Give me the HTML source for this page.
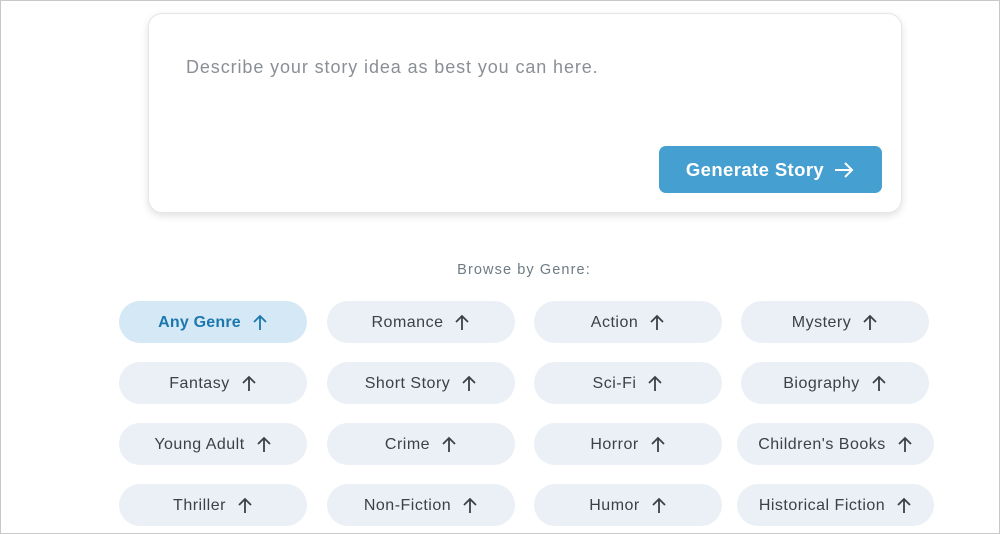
<!DOCTYPE html><html><head><style>
body{margin:0;width:1000px;height:534px;background:#fff;font-family:"Liberation Sans",sans-serif;position:relative;overflow:hidden}
.frame{position:absolute;left:0;top:0;width:998px;height:532px;border:1px solid #c8c8c8}
.card{position:absolute;left:148px;top:13px;width:752px;height:198px;border:1px solid #e4e6ea;border-radius:14px;box-shadow:0 3px 8px rgba(0,0,0,.12);background:#fff}
.ph{position:absolute;left:37px;top:43px;font-size:18px;color:#8a8f96;letter-spacing:0.9px}
.btn{position:absolute;left:510px;top:132px;width:223px;height:47px;background:#459fd0;border-radius:7px;color:#fff;font-weight:bold;font-size:18.5px;letter-spacing:0.4px;display:flex;align-items:center;justify-content:center;gap:9px}
.lbl{position:absolute;left:0;width:1048px;top:262px;text-align:center;font-size:14.5px;color:#6e7b82;letter-spacing:1.1px}
.c{position:absolute;height:42px;border-radius:21px;background:#eaf0f6;color:#3c4146;font-size:16px;letter-spacing:0.5px;display:flex;align-items:center;justify-content:center;gap:11px;padding-top:1px;box-sizing:border-box}
.c svg{width:16px;height:18px}
.a{background:#d5e8f5;color:#1b78ae;font-weight:bold;letter-spacing:0.2px}
</style></head><body><div class="frame"></div>
<div class="card"><div class="ph">Describe your story idea as best you can here.</div>
<div class="btn">Generate Story <svg width="22" height="18" viewBox="0 0 22 18"><path d="M2 9H19M12 2l7 7-7 7" fill="none" stroke="#fff" stroke-width="2"/></svg></div></div>
<div class="lbl">Browse by Genre:</div>
<div id="g"></div>
<script>
var n=["Any Genre","Romance","Action","Mystery","Fantasy","Short Story","Sci-Fi","Biography","Young Adult","Crime","Horror","Children's Books","Thriller","Non-Fiction","Humor","Historical Fiction"];
var xs=[119,327,534,741],ys=[301,362,423,484],h="";
n.forEach(function(t,i){var x=xs[i%4],w=188,y=ys[Math.floor(i/4)];if(i==11||i==15){x=737;w=197}
var col=i==0?"#1b78ae":"#3c4146";
h+='<div class="c'+(i==0?' a':'')+'" style="left:'+x+'px;top:'+y+'px;width:'+w+'px">'+t+' <svg viewBox="0 0 16 18"><path d="M8 16V2M2 8l6-6 6 6" fill="none" stroke="'+col+'" stroke-width="1.8"/></svg></div>'});
document.getElementById("g").innerHTML=h;
</script></body></html>
